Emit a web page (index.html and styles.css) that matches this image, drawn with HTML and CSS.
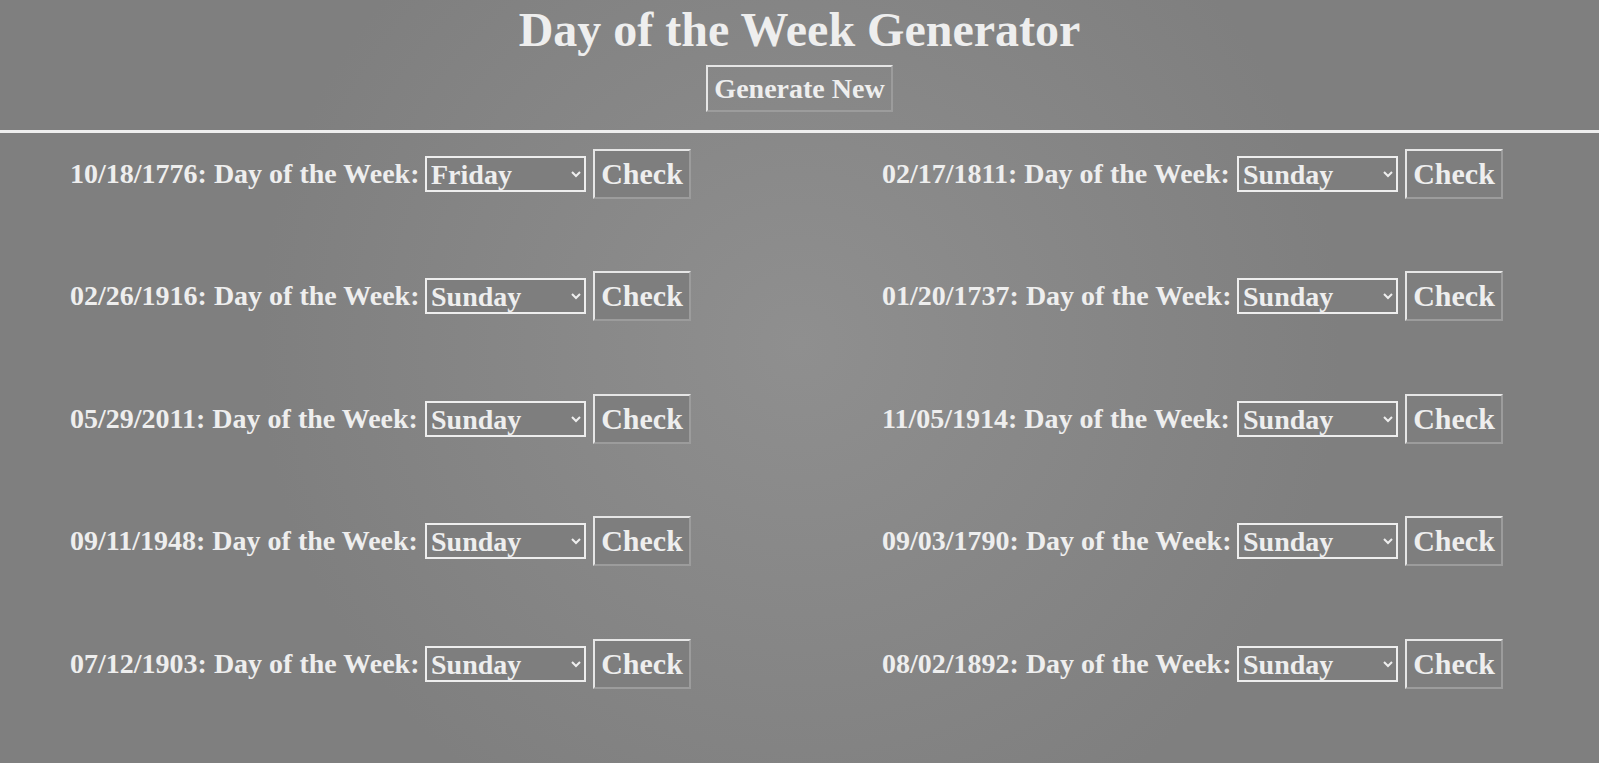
FILE: index.html
```html
<!DOCTYPE html>
<html lang="en">
<head>
    <meta charset="UTF-8">
    <meta name="viewport" content="width=device-width, initial-scale=1.0">
    <title>Day of the Week Generator</title>
    <link rel="stylesheet" href="styles.css">
</head>
<body>
    <div class="header">
        <h1>Day of the Week Generator</h1>
        <button class="generate">Generate New</button>
    </div>
    <hr class="divider">

    <div class="questions">
        <div class="question">
            <span class="date">10/18/1776: Day of the Week:</span>
            <select>
                <option>Sunday</option><option>Monday</option><option>Tuesday</option><option>Wednesday</option><option>Thursday</option><option selected>Friday</option><option>Saturday</option>
            </select>
            <button class="check">Check</button>
        </div>
        <div class="question">
            <span class="date">02/17/1811: Day of the Week:</span>
            <select>
                <option>Sunday</option><option>Monday</option><option>Tuesday</option><option>Wednesday</option><option>Thursday</option><option>Friday</option><option>Saturday</option>
            </select>
            <button class="check">Check</button>
        </div>
        <div class="question">
            <span class="date">02/26/1916: Day of the Week:</span>
            <select>
                <option>Sunday</option><option>Monday</option><option>Tuesday</option><option>Wednesday</option><option>Thursday</option><option>Friday</option><option>Saturday</option>
            </select>
            <button class="check">Check</button>
        </div>
        <div class="question">
            <span class="date">01/20/1737: Day of the Week:</span>
            <select>
                <option>Sunday</option><option>Monday</option><option>Tuesday</option><option>Wednesday</option><option>Thursday</option><option>Friday</option><option>Saturday</option>
            </select>
            <button class="check">Check</button>
        </div>
        <div class="question">
            <span class="date">05/29/2011: Day of the Week:</span>
            <select>
                <option>Sunday</option><option>Monday</option><option>Tuesday</option><option>Wednesday</option><option>Thursday</option><option>Friday</option><option>Saturday</option>
            </select>
            <button class="check">Check</button>
        </div>
        <div class="question">
            <span class="date">11/05/1914: Day of the Week:</span>
            <select>
                <option>Sunday</option><option>Monday</option><option>Tuesday</option><option>Wednesday</option><option>Thursday</option><option>Friday</option><option>Saturday</option>
            </select>
            <button class="check">Check</button>
        </div>
        <div class="question">
            <span class="date">09/11/1948: Day of the Week:</span>
            <select>
                <option>Sunday</option><option>Monday</option><option>Tuesday</option><option>Wednesday</option><option>Thursday</option><option>Friday</option><option>Saturday</option>
            </select>
            <button class="check">Check</button>
        </div>
        <div class="question">
            <span class="date">09/03/1790: Day of the Week:</span>
            <select>
                <option>Sunday</option><option>Monday</option><option>Tuesday</option><option>Wednesday</option><option>Thursday</option><option>Friday</option><option>Saturday</option>
            </select>
            <button class="check">Check</button>
        </div>
        <div class="question">
            <span class="date">07/12/1903: Day of the Week:</span>
            <select>
                <option>Sunday</option><option>Monday</option><option>Tuesday</option><option>Wednesday</option><option>Thursday</option><option>Friday</option><option>Saturday</option>
            </select>
            <button class="check">Check</button>
        </div>
        <div class="question">
            <span class="date">08/02/1892: Day of the Week:</span>
            <select>
                <option>Sunday</option><option>Monday</option><option>Tuesday</option><option>Wednesday</option><option>Thursday</option><option>Friday</option><option>Saturday</option>
            </select>
            <button class="check">Check</button>
        </div>
    </div>
</body>
</html>
```

FILE: styles.css
```css
* {
    box-sizing: border-box;
}

body {
    margin: 0;
    min-height: 100vh;
    font-family: "Liberation Serif", "Times New Roman", serif;
    font-weight: bold;
    color: #eeeeee;
    background: radial-gradient(circle at 50% 45%, #8f8f8f 0%, #7f7f7f 60%);
    overflow: hidden;
}

.header {
    text-align: center;
    padding-top: 2px;
}

h1 {
    margin: 0;
    font-size: 48px;
}

.generate {
    margin-top: 8px;
    height: 47px;
    padding: 0 6px;
    font-family: inherit;
    font-weight: bold;
    font-size: 28px;
    color: #eeeeee;
    background: transparent;
    border: 2px solid;
    border-color: #e6e6e6 #9c9c9c #9c9c9c #e6e6e6;
}

.divider {
    margin: 18px 0 0;
    height: 3px;
    border: none;
    background: #eeeeee;
}

.questions {
    display: grid;
    grid-template-columns: 812px 1fr;
    row-gap: 72.4px;
    padding: 16px 0 0 70px;
}

.question {
    display: flex;
    align-items: center;
}

.date {
    width: 347px;
    margin-right: 8px;
    font-size: 28px;
    white-space: nowrap;
}

select {
    width: 161px;
    height: 36px;
    margin-right: 7px;
    padding: 0;
    font-family: inherit;
    font-weight: bold;
    font-size: 28px;
    color: #eeeeee;
    background: #7e7e7e;
    border: 2px solid #eeeeee;
    border-radius: 0;
}

.check {
    width: 98px;
    height: 50px;
    padding: 0 6px;
    font-family: inherit;
    font-weight: bold;
    font-size: 30px;
    color: #eeeeee;
    background: #7e7e7e;
    border: 2px solid;
    border-color: #e6e6e6 #9c9c9c #9c9c9c #e6e6e6;
}
```
